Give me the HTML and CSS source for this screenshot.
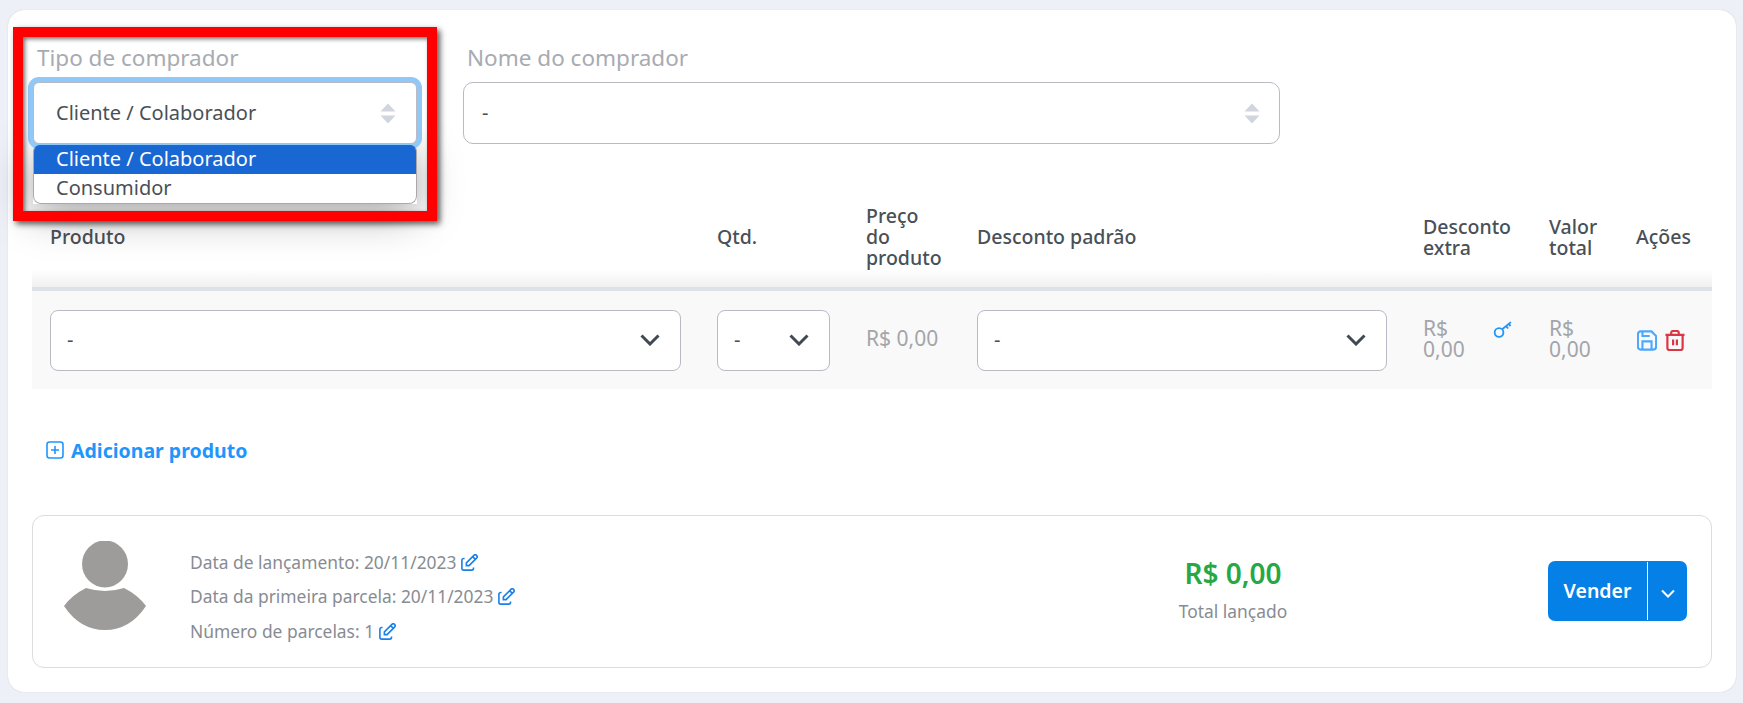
FILE: index.html
```html
<!DOCTYPE html>
<html lang="en">
<head>
    <meta charset="UTF-8" />
    <title>Venda</title>
    <link rel="stylesheet" href="styles.css">
</head>
<body>

    <div class="card">
        <div class="highlight"></div>

        <div class="buyer-row">
            <div class="field field-type">
                <label class="field-label">Tipo de comprador</label>
                <div class="select select-focus">
                    <span>Cliente / Colaborador</span>
                    <svg class="updown" viewBox="0 0 16 21"><path d="M8 0.5 15.5 8.5H0.5Z M8 20.5 0.5 12.5H15.5Z" /></svg>
                </div>
                <ul class="dropdown">
                    <li class="active">Cliente / Colaborador</li>
                    <li>Consumidor</li>
                </ul>
            </div>
            <div class="field field-name">
                <label class="field-label">Nome do comprador</label>
                <div class="select select-name">
                    <span>-</span>
                    <svg class="updown" viewBox="0 0 16 21"><path d="M8 0.5 15.5 8.5H0.5Z M8 20.5 0.5 12.5H15.5Z" /></svg>
                </div>
            </div>
        </div>

        <table class="products">
            <colgroup>
                <col class="col-product">
                <col class="col-qty">
                <col class="col-price">
                <col class="col-discount">
                <col class="col-extra">
                <col class="col-total">
                <col class="col-actions">
            </colgroup>
            <thead>
                <tr>
                    <th>Produto</th>
                    <th>Qtd.</th>
                    <th>Preço<br>do<br>produto</th>
                    <th>Desconto padrão</th>
                    <th>Desconto<br>extra</th>
                    <th>Valor<br>total</th>
                    <th>Ações</th>
                </tr>
            </thead>
            <tbody>
                <tr>
                    <td>
                        <div class="select">
                            <span>-</span>
                            <svg class="chevron" viewBox="0 0 20 12"><path d="M1.5 1.5 10 10 18.5 1.5" /></svg>
                        </div>
                    </td>
                    <td>
                        <div class="select">
                            <span>-</span>
                            <svg class="chevron" viewBox="0 0 20 12"><path d="M1.5 1.5 10 10 18.5 1.5" /></svg>
                        </div>
                    </td>
                    <td class="muted">R$ 0,00</td>
                    <td>
                        <div class="select">
                            <span>-</span>
                            <svg class="chevron" viewBox="0 0 20 12"><path d="M1.5 1.5 10 10 18.5 1.5" /></svg>
                        </div>
                    </td>
                    <td class="muted">
                        <div class="extra">
                            <span>R$<br>0,00</span>
                            <svg class="icon icon-key" viewBox="0 0 24 24"><circle cx="7" cy="17" r="5.5" /><path d="M11 13 22 4 M16 9l2.5 3 M19.5 6.5l2 2.5" /></svg>
                        </div>
                    </td>
                    <td class="muted">R$<br>0,00</td>
                    <td>
                        <div class="actions">
                            <svg class="icon icon-save" viewBox="1 1 22 22"><path d="M19 22H5a3 3 0 0 1-3-3V5a3 3 0 0 1 3-3h12l5 5v12a3 3 0 0 1-3 3z M17 22v-9H7v9 M7 2v5h8" /></svg>
                            <svg class="icon icon-trash" viewBox="1.5 1 21 22"><path d="M2 6h20 M8 6V4a2 2 0 0 1 2-2h4a2 2 0 0 1 2 2v2 M20 6v14a2 2 0 0 1-2 2H6a2 2 0 0 1-2-2V6 M10 11v6 M14 11v6" /></svg>
                        </div>
                    </td>
                </tr>
            </tbody>
        </table>

        <a class="add-product" href="#">
            <svg class="icon icon-plus" viewBox="0 0 18 18"><rect x="1" y="1" width="16" height="16" rx="2.5" /><path d="M9 5v8 M5 9h8" /></svg>
            Adicionar produto
        </a>

        <div class="summary">
            <svg class="avatar" viewBox="0 0 82 89">
                <ellipse cx="41" cy="23" rx="23" ry="23.5" />
                <path d="M22 47Q41 53 60 47Q74 54 82 65Q66 89 41 89Q16 89 0 65Q8 54 22 47Z" />
            </svg>
            <div class="dates">
                <p>Data de lançamento: 20/11/2023 <svg class="edit" viewBox="3 2 19 19"><path d="M7 7H6a2 2 0 0 0-2 2v9a2 2 0 0 0 2 2h9a2 2 0 0 0 2-2v-1 M20.4 6.6a2.1 2.1 0 0 0-3-3L9 12v3h3z M16 5l3 3" /></svg></p>
                <p>Data da primeira parcela: 20/11/2023 <svg class="edit" viewBox="3 2 19 19"><path d="M7 7H6a2 2 0 0 0-2 2v9a2 2 0 0 0 2 2h9a2 2 0 0 0 2-2v-1 M20.4 6.6a2.1 2.1 0 0 0-3-3L9 12v3h3z M16 5l3 3" /></svg></p>
                <p>Número de parcelas: 1 <svg class="edit" viewBox="3 2 19 19"><path d="M7 7H6a2 2 0 0 0-2 2v9a2 2 0 0 0 2 2h9a2 2 0 0 0 2-2v-1 M20.4 6.6a2.1 2.1 0 0 0-3-3L9 12v3h3z M16 5l3 3" /></svg></p>
            </div>
            <div class="total">
                <strong>R$ 0,00</strong>
                <span>Total lançado</span>
            </div>
            <div class="sell">
                <button class="sell-main" type="button">Vender</button>
                <button class="sell-more" type="button"><svg viewBox="0 0 14 9"><path d="M1 1.5 7 7.5 13 1.5" /></svg></button>
            </div>
        </div>
    </div>

</body>
</html>
```

FILE: styles.css
```css
:root {
    --page: #edf1f7;
    --line: #b9bac3;
    --text: #495057;
    --muted: #a3a5a9;
    --blue: #1e96fc;
}

* {
    box-sizing: border-box;
    margin: 0;
    padding: 0;
}

body {
    font-family: 'Noto Sans', sans-serif;
    font-size: 20px;
    background: var(--page);
    color: var(--text);
    padding: 10px 7px 11px 8px;
}

.card {
    position: relative;
    background: #fff;
    border-radius: 16px;
    box-shadow: 0 0 1px rgba(0, 0, 0, 0.25);
    padding: 36px 24px 25px;
    height: 682px;
}

/* Red marker drawn over the screenshot */
.highlight {
    position: absolute;
    top: 17px;
    left: 5px;
    width: 424px;
    height: 194px;
    border: 10px solid #ff0000;
    box-shadow: 3px 3px 6px rgba(0, 0, 0, 0.65), inset 2px 2px 4px rgba(0, 0, 0, 0.55);
    z-index: 5;
    pointer-events: none;
}

.buyer-row {
    display: flex;
    gap: 46px;
    padding-left: 1px;
    margin-bottom: 44px;
}

.field {
    position: relative;
}

.field-type {
    width: 384px;
}

.field-name {
    width: 817px;
}

.field-label {
    display: block;
    font-size: 22.5px;
    line-height: 24px;
    color: #a8abb2;
    padding-left: 4px;
    margin-bottom: 12px;
}

.select {
    display: flex;
    align-items: center;
    justify-content: space-between;
    height: 61px;
    padding: 0 20px 0 16px;
    background: #fff;
    border: 1px solid var(--line);
    border-radius: 8px;
}

.select span {
    margin-top: -2px;
}

.select-focus {
    position: relative;
    z-index: 3;
    height: 62px;
    padding: 0 20px 0 22px;
    border-radius: 6px;
    box-shadow: 0 0 0 5px #90c8f8;
}

.select-name {
    height: 62px;
    padding: 0 19px 0 18px;
    border-radius: 10px;
}

.updown {
    width: 16px;
    height: 21px;
    fill: #d2d5de;
}

.chevron {
    width: 20px;
    height: 12px;
    fill: none;
    stroke: #414a54;
    stroke-width: 3;
}

.dropdown {
    position: absolute;
    top: 99px;
    left: 0;
    width: 384px;
    list-style: none;
    background: #fff;
    border: 1px solid #a9a9a9;
    border-top: none;
    border-radius: 6px 6px 8px 8px;
    overflow: hidden;
    z-index: 4;
}

.dropdown li {
    height: 29px;
    line-height: 27px;
    padding-left: 22px;
}

.dropdown .active {
    background: #1967d2;
    color: #fff;
}

.field-type::after {
    content: "";
    position: absolute;
    top: 102px;
    left: 0;
    width: 384px;
    height: 56px;
    box-shadow: 0 8px 45px rgba(0, 0, 0, 0.4);
    z-index: 1;
}

.products {
    width: 1680px;
    table-layout: fixed;
    border-collapse: separate;
    border-spacing: 0;
}

.col-product { width: 667px; }
.col-qty { width: 149px; }
.col-price { width: 111px; }
.col-discount { width: 446px; }
.col-extra { width: 126px; }
.col-total { width: 87px; }
.col-actions { width: 94px; }

.products th {
    height: 103px;
    padding: 0 0 2px 18px;
    font-weight: 500;
    font-size: 19.5px;
    line-height: 21px;
    text-align: left;
    vertical-align: middle;
    background: linear-gradient(to bottom, #fff 82%, #f0f0f0 100%);
    border-bottom: 4px solid #dee2e6;
}

.products td {
    height: 98px;
    padding: 0 18px;
    line-height: 21px;
    vertical-align: middle;
    background: #f9f9f9;
}

.products .muted {
    padding-bottom: 3px;
    padding-right: 0;
    font-size: 21px;
    color: var(--muted);
}

.extra {
    display: flex;
    justify-content: space-between;
    align-items: flex-start;
    padding-right: 18px;
}

.icon {
    fill: none;
    stroke-width: 2.3;
}

.icon-key {
    width: 20px;
    height: 19px;
    margin-top: 1px;
    stroke: var(--blue);
}

.actions {
    display: flex;
    gap: 8px;
    margin-left: 1px;
}

.icon-save {
    width: 20px;
    height: 21px;
    stroke: #4aa8ff;
}

.icon-trash {
    width: 20px;
    height: 21px;
    stroke: #dc3545;
}

.add-product {
    display: flex;
    align-items: center;
    gap: 7px;
    height: 22px;
    margin: 50px 0 54px 14px;
    color: var(--blue);
    font-weight: 700;
    font-size: 19.5px;
    text-decoration: none;
}

.add-product .icon-plus {
    width: 18px;
    height: 18px;
    stroke: var(--blue);
    stroke-width: 1.6;
}

.summary {
    display: flex;
    align-items: center;
    height: 153px;
    padding: 0 24px 0 31px;
    border: 1px solid #dcdcdc;
    border-radius: 12px;
}

.avatar {
    flex: none;
    width: 82px;
    height: 89px;
    fill: #9d9c9b;
    margin: -12px 44px 0 0;
}

.dates {
    flex: 1;
    margin-top: 9px;
    font-size: 17.4px;
    line-height: 24px;
    color: #878c93;
}

.dates p + p {
    margin-top: 10.5px;
}

.edit {
    width: 17px;
    height: 17px;
    fill: none;
    stroke: #1b80e8;
    stroke-width: 1.8;
    vertical-align: -2px;
}

.total {
    display: flex;
    flex-direction: column;
    align-items: center;
    width: 160px;
    margin-right: 235px;
    margin-top: -3px;
}

.total strong {
    font-size: 28px;
    font-weight: 600;
    color: #28a745;
    line-height: 30px;
    margin-bottom: 12px;
}

.total span {
    font-size: 17.4px;
    line-height: 22px;
    color: #878c93;
}

.sell {
    display: flex;
    height: 60px;
    margin-top: -2px;
    background: #0580e6;
    border-radius: 7px;
    overflow: hidden;
}

.sell button {
    background: none;
    border: none;
    color: #fff;
    font-family: inherit;
    font-size: 19.5px;
    font-weight: 600;
}

.sell .sell-main {
    width: 100px;
    border-right: 1px solid #fff;
    margin: 1px 0;
}

.sell-more {
    width: 39px;
}

.sell-more svg {
    width: 14px;
    height: 9px;
    fill: none;
    stroke: #fff;
    stroke-width: 2;
}
```
